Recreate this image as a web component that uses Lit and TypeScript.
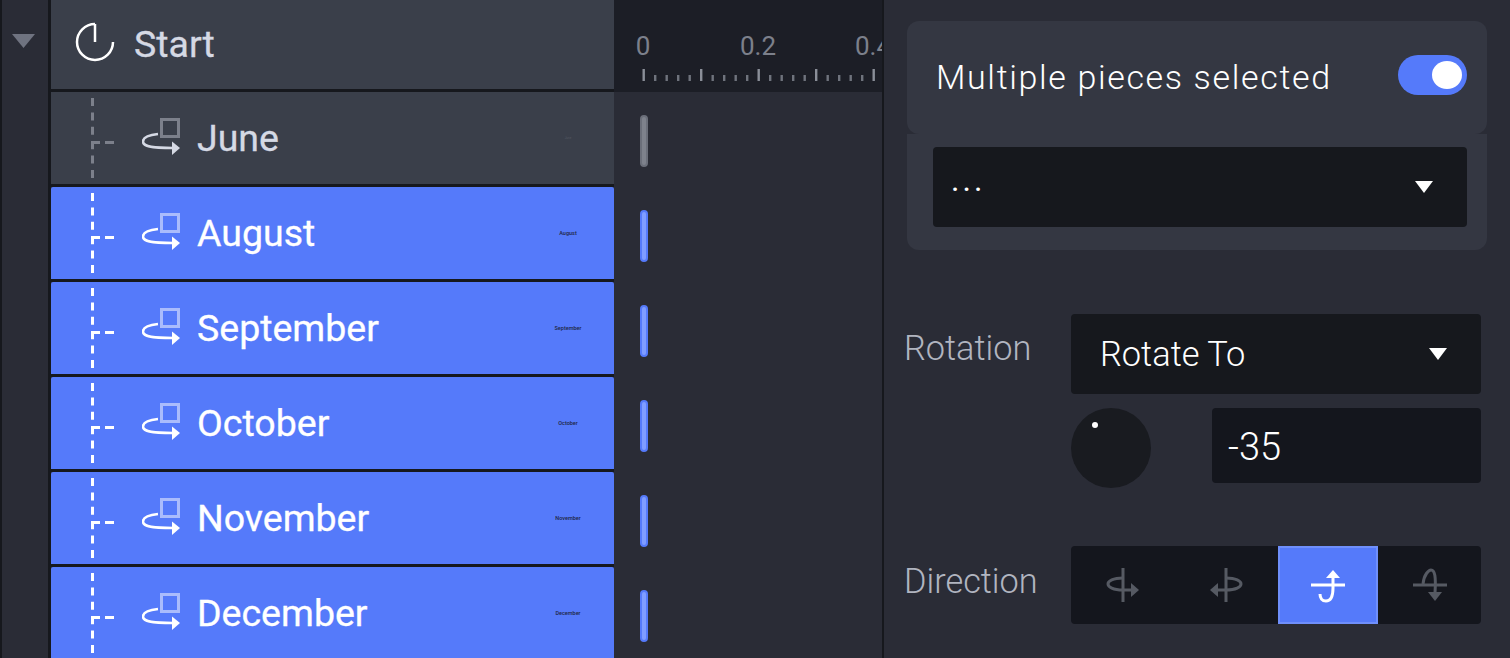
import { LitElement, html, css, svg } from "lit";
import { customElement } from "lit/decorators.js";

const ROWS = [
  { name: "June", thumb: "June", sel: false },
  { name: "August", thumb: "August", sel: true },
  { name: "September", thumb: "September", sel: true },
  { name: "October", thumb: "October", sel: true },
  { name: "November", thumb: "November", sel: true },
  { name: "December", thumb: "December", sel: true },
];

const ticks = Array.from({ length: 21 }, (_, i) => {
  const x = 2.5 + i * 11.5;
  const major = i % 5 === 0;
  return svg`<rect x=${x - 1} y=${major ? 0 : 6} width="2.4" height=${major ? 12 : 6} fill=${major ? "#8a8e98" : "#6f737d"}></rect>`;
});

const dirIcons = [
  svg`<path d="M20 3V37" /><path d="M20 13C10 13 5 16 5 19C5 22 10 25 20 25H29" /><path class="f" d="M28 18L36 25L28 32Z" />`,
  svg`<path d="M20 3V37" /><path d="M20 13C30 13 35 16 35 19C35 22 30 25 20 25H11" /><path class="f" d="M12 18L4 25L12 32Z" />`,
  svg`<path d="M3 20H37" /><path d="M25 12V23C25 32 22 36 18 36C14 36 12 33 12 29" /><path class="f" d="M18 13L25 5L32 13Z" />`,
  svg`<path d="M3 20H37" /><path d="M13 19C14 9 19 5 21 5C25 5 26 12 25 28" /><path class="f" d="M18 27L25 36L32 27Z" />`,
];

@customElement("app-root")
export class AppRoot extends LitElement {
  static styles = css`
    :host {
      display: block;
      width: 1510px;
      height: 658px;
      overflow: hidden;
      background: #2a2c36;
      font-family: Roboto, sans-serif;
    }
    .page {
      display: flex;
      height: 658px;
    }
    .strip {
      width: 51px;
      flex: none;
      box-sizing: border-box;
      border-left: 2px solid #16181d;
      border-right: 3px solid #16181d;
      background: #2a2c36;
      padding: 34px 0 0 10px;
    }
    .strip svg {
      display: block;
    }
    .timeline {
      width: 831px;
      flex: none;
      box-sizing: border-box;
      height: 658px;
      overflow: hidden;
    }
    .row {
      display: flex;
      height: 95px;
    }
    .row.head {
      height: 92px;
    }
    .name {
      width: 563px;
      flex: none;
      box-sizing: border-box;
      border-bottom: 3px solid #16181d;
      background: #3a3f4a;
      display: flex;
      align-items: center;
      color: #d5d9e4;
      font-size: 37.5px;
      font-weight: 400;
      -webkit-text-stroke: 0.3px currentColor;
    }
    .row.sel .name {
      background: #557afa;
      color: #fff;
      border-radius: 2px 2px 0 0;
    }
    .head .name {
      padding-left: 24px;
      gap: 19px;
    }
    .head .name svg {
      margin-bottom: 5px;
    }
    .tree {
      margin-left: 40px;
      flex: none;
      display: block;
    }
    .rot {
      margin-left: 25px;
      margin-right: 15px;
      flex: none;
      display: block;
    }
    .label {
      flex: 1;
    }
    .head .label {
      position: relative;
      top: -1px;
    }
    .thumb {
      width: 42px;
      flex: none;
      margin-right: 25px;
      text-align: center;
      font-size: 5.500px;
      font-weight: 500;
      color: #20263f;
      -webkit-text-stroke: 0;
    }
    .row:not(.sel) .thumb {
      color: #4f535e;
      font-size: 3px;
    }
    .track {
      flex: 1;
      min-width: 0;
      padding: 23px 0 0 26px;
      box-sizing: border-box;
    }
    .bar {
      width: 8px;
      height: 52px;
      box-sizing: border-box;
      border-radius: 4px;
      border: 2px solid #6b6f7a;
      background: #7e828c;
    }
    .row.sel .bar {
      border-color: #557afa;
      background: #7f9dff;
    }
    .ruler {
      flex: 1;
      min-width: 0;
      background: #1c1e26;
      position: relative;
      overflow: hidden;
    }
    .ruler span {
      position: absolute;
      top: 32px;
      color: #7c808b;
      font-size: 26px;
      line-height: 28px;
      transform: translateX(-50%);
    }
    .ruler svg {
      position: absolute;
      left: 27px;
      top: 69px;
    }
    .panel {
      flex: none;
      width: 628px;
      box-sizing: border-box;
      border-left: 2px solid #16181d;
      padding: 21px 29px 0 21px;
      font-weight: 300;
      color: #fff;
    }
    .card-top {
      margin-left: 2px;
      margin-right: -6px;
      height: 113px;
      box-sizing: border-box;
      background: #343742;
      border-radius: 12px;
      padding: 0 20px 1px 29px;
      display: flex;
      align-items: center;
      justify-content: space-between;
    }
    .title {
      font-size: 34px;
      letter-spacing: 1.64px;
      color: #fff;
    }
    .toggle {
      width: 69px;
      height: 40px;
      margin-bottom: 4px;
      border-radius: 20px;
      background: #557afa;
      display: flex;
      justify-content: flex-end;
      align-items: center;
      padding-right: 5px;
      box-sizing: border-box;
    }
    .toggle i {
      display: block;
      width: 30px;
      height: 28px;
      border-radius: 50%;
      background: #fff;
    }
    .card-bottom {
      margin-left: 2px;
      margin-right: -6px;
      height: 116px;
      box-sizing: border-box;
      background: #343742;
      border-radius: 0 0 12px 12px;
      padding: 13px 20px 0 26px;
    }
    .select {
      background: #16181d;
      border-radius: 4px;
      display: flex;
      align-items: center;
      justify-content: space-between;
      box-sizing: border-box;
    }
    .select svg {
      display: block;
    }
    .card-bottom .select {
      height: 80px;
      padding: 0 34px 0 18px;
      font-size: 32px;
      font-weight: 400;
      letter-spacing: 3px;
    }
    .dots {
      position: relative;
      top: -7px;
    }
    .field {
      display: grid;
      grid-template-columns: 166px 410px;
      margin-top: 64px;
    }
    .field-label {
      font-size: 34.300px;
      color: #b1b5c0;
      margin-top: 12px;
      line-height: 44px;
      margin-left: -1px;
    }
    .field .select {
      height: 80px;
      padding: 0 34px 0 29px;
      font-size: 34.400px;
    }
    .angle {
      display: flex;
      justify-content: space-between;
      margin-top: 14px;
    }
    .knob {
      width: 80px;
      height: 80px;
      border-radius: 50%;
      background: #191b20;
      position: relative;
    }
    .knob i {
      position: absolute;
      left: 21px;
      top: 14px;
      width: 6px;
      height: 6px;
      border-radius: 50%;
      background: #fff;
    }
    .input {
      width: 269px;
      height: 75px;
      background: #14161d;
      border-radius: 4px;
      padding-left: 16px;
      box-sizing: border-box;
      font-size: 38px;
      line-height: 78px;
    }
    .field.dir {
      margin-top: 58px;
    }
    .field.dir .field-label {
      margin-top: 13px;
    }
    .buttons {
      display: grid;
      grid-template-columns: 103px 104px 100px 103px;
      height: 78px;
      background: #14161d;
      border-radius: 4px;
    }
    .btn {
      display: flex;
      align-items: center;
      justify-content: center;
      box-sizing: border-box;
      color: #565a63;
    }
    .btn.on {
      background: #557afa;
      border: 2px solid #6f8ffb;
      color: #fff;
    }
    .btn svg {
      display: block;
      fill: none;
      stroke: currentColor;
      stroke-width: 3;
    }
    .btn svg .f {
      fill: currentColor;
      stroke: none;
    }
  `;

  private arrow() {
    return html`<svg width="18" height="12" viewBox="0 0 18 12"><path d="M0 0H18L9 12Z" fill="#fff"></path></svg>`;
  }

  private tree(sel: boolean) {
    const c = sel ? "#fff" : "#7c808b";
    return html`<svg class="tree" width="26" height="92" viewBox="0 0 26 92" fill="none" stroke=${c} stroke-width="3">
      <path d="M1.500 6V86" stroke-dasharray="8 6.400"></path>
      <path d="M0 50.500H9M14 50.500H23"></path>
    </svg>`;
  }

  private rot(sel: boolean) {
    const sq = sel ? "#aabcfc" : "#7c808b";
    const ar = sel ? "#fff" : "#d5d9e4";
    return html`<svg class="rot" width="40" height="40" viewBox="0 0 40 40" fill="none">
      <rect x="19.500" y="1.500" width="17" height="17" stroke=${sq} stroke-width="3"></rect>
      <path d="M16 16C6 17 1 20 1 23.500C1 28 8 30 31 30" stroke=${ar} stroke-width="2.600"></path>
      <path d="M30 23.500L38 30L30 37Z" fill=${ar}></path>
    </svg>`;
  }

  render() {
    return html`
      <div class="page">
        <div class="strip">
          <svg width="24" height="14" viewBox="0 0 24 14"><path d="M0 0H23L11.500 14Z" fill="#6f7380"></path></svg>
        </div>
        <div class="timeline">
          <div class="row head">
            <div class="name">
              <svg width="40" height="40" viewBox="0 0 40 40" fill="none" stroke="#fff" stroke-width="2.500">
                <path d="M20 2A18 18 0 1 0 38 20"></path>
                <path d="M20 2V20"></path>
              </svg>
              <span class="label">Start</span>
            </div>
            <div class="ruler">
              <span style="left:29px">0</span>
              <span style="left:144px">0.2</span>
              <span style="left:259px">0.4</span>
              <svg width="240" height="12" viewBox="0 0 240 12">${ticks}</svg>
            </div>
          </div>
          ${ROWS.map(
            (r) => html`
              <div class="row ${r.sel ? "sel" : ""}">
                <div class="name">
                  ${this.tree(r.sel)} ${this.rot(r.sel)}
                  <span class="label">${r.name}</span>
                  <span class="thumb">${r.thumb}</span>
                </div>
                <div class="track"><div class="bar"></div></div>
              </div>
            `
          )}
        </div>
        <div class="panel">
          <div class="card-top">
            <span class="title">Multiple pieces selected</span>
            <div class="toggle"><i></i></div>
          </div>
          <div class="card-bottom">
            <div class="select"><span class="dots">...</span>${this.arrow()}</div>
          </div>
          <div class="field">
            <div class="field-label">Rotation</div>
            <div>
              <div class="select"><span>Rotate To</span>${this.arrow()}</div>
              <div class="angle">
                <div class="knob"><i></i></div>
                <div class="input">-35</div>
              </div>
            </div>
          </div>
          <div class="field dir">
            <div class="field-label">Direction</div>
            <div class="buttons">
              ${dirIcons.map(
                (ic, i) => html`<div class="btn ${i === 2 ? "on" : ""}">
                  <svg width="40" height="40" viewBox="0 0 40 40">${ic}</svg>
                </div>`
              )}
            </div>
          </div>
        </div>
      </div>
    `;
  }
}
